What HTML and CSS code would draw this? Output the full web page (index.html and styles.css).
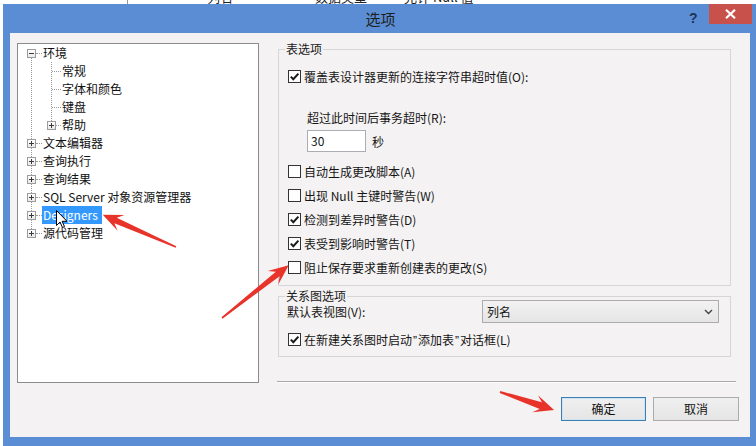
FILE: index.html
```html
<!DOCTYPE html>
<html lang="zh-CN">
<head>
<meta charset="utf-8">
<title>选项</title>
<link rel="stylesheet" href="styles.css">
</head>
<body>
<div class="backdrop">
  <div class="backdrop-inner">
    <span class="bd-line"></span>
    <span class="bd-t1">列名</span>
    <span class="bd-t2">数据类型</span>
    <span class="bd-t3">允许 Null 值</span>
  </div>
</div>
<div class="dialog">
  <div class="titlebar">
    <div class="title-spacer"></div>
    <div class="title">选项</div>
    <div class="help">?</div>
    <div class="close">
      <svg width="11" height="10" viewBox="0 0 11 10"><path d="M1 0.8 L10 9.2 M10 0.8 L1 9.2" stroke="#fff" stroke-width="2.2" fill="none"/></svg>
    </div>
  </div>
  <div class="content">
    <div class="tree">
      <div class="node">
        <div class="row root"><span class="exp minus"></span><span class="dash"></span><span class="label">环境</span></div>
        <div class="children">
          <div class="row leaf"><span class="dash"></span><span class="label">常规</span></div>
          <div class="row leaf"><span class="dash"></span><span class="label">字体和颜色</span></div>
          <div class="row leaf"><span class="dash"></span><span class="label">键盘</span></div>
          <div class="row sub"><span class="exp plus"></span><span class="dash"></span><span class="label">帮助</span></div>
        </div>
      </div>
      <div class="row root"><span class="exp plus"></span><span class="dash"></span><span class="label">文本编辑器</span></div>
      <div class="row root"><span class="exp plus"></span><span class="dash"></span><span class="label">查询执行</span></div>
      <div class="row root"><span class="exp plus"></span><span class="dash"></span><span class="label">查询结果</span></div>
      <div class="row root"><span class="exp plus"></span><span class="dash"></span><span class="label">SQL Server 对象资源管理器</span></div>
      <div class="row root"><span class="exp plus"></span><span class="dash"></span><span class="label selected">Designers</span></div>
      <div class="row root"><span class="exp plus"></span><span class="dash"></span><span class="label">源代码管理</span></div>
    </div>
    <div class="right">
      <div class="group g1">
        <div class="group-title">表选项</div>
        <div class="check first"><span class="box on"><svg width="11" height="11" viewBox="0 0 11 11"><path d="M1.8 5.6 L4.3 8.2 L9.4 2.6" stroke="#1a1a1a" stroke-width="2" fill="none"/></svg></span><span>覆盖表设计器更新的连接字符串超时值(O):</span></div>
        <div class="timeout-label">超过此时间后事务超时(R):</div>
        <div class="timeout-row"><div class="input">30</div><span class="unit">秒</span></div>
        <div class="check-list">
          <div class="check tall"><span class="box"></span><span>自动生成更改脚本(A)</span></div>
          <div class="check tall"><span class="box"></span><span>出现 Null 主键时警告(W)</span></div>
          <div class="check tall"><span class="box on"><svg width="11" height="11" viewBox="0 0 11 11"><path d="M1.8 5.6 L4.3 8.2 L9.4 2.6" stroke="#1a1a1a" stroke-width="2" fill="none"/></svg></span><span>检测到差异时警告(D)</span></div>
          <div class="check tall"><span class="box on"><svg width="11" height="11" viewBox="0 0 11 11"><path d="M1.8 5.6 L4.3 8.2 L9.4 2.6" stroke="#1a1a1a" stroke-width="2" fill="none"/></svg></span><span>表受到影响时警告(T)</span></div>
          <div class="check tall"><span class="box"></span><span>阻止保存要求重新创建表的更改(S)</span></div>
        </div>
      </div>
      <div class="group g2">
        <div class="group-title">关系图选项</div>
        <div class="select-row">
          <span>默认表视图(V):</span>
          <div class="select"><span>列名</span><svg width="9" height="6" viewBox="0 0 9 6"><path d="M1 1 L4.5 4.5 L8 1" stroke="#444" stroke-width="1.4" fill="none"/></svg></div>
        </div>
        <div class="check diag"><span class="box on"><svg width="11" height="11" viewBox="0 0 11 11"><path d="M1.8 5.6 L4.3 8.2 L9.4 2.6" stroke="#1a1a1a" stroke-width="2" fill="none"/></svg></span><span>在新建关系图时启动<span class="q">”</span>添加表<span class="q">”</span>对话框(L)</span></div>
      </div>
      <div class="sep"></div>
      <div class="buttons">
        <div class="btn default">确定</div>
        <div class="btn">取消</div>
      </div>
    </div>
  </div>
</div>
<svg class="annot" width="756" height="446" viewBox="0 0 756 446">
  <g fill="#e8332b">
    <polygon transform="translate(176 247) rotate(203.7)" points="0,-0.8 66,-3 60,-8.5 80,0 60,8.5 66,3 0,0.8"/>
    <polygon transform="translate(222 318) rotate(-38.3)" points="0,-0.8 71,-3 65,-8.5 85,0 65,8.5 71,3 0,0.8"/>
    <polygon transform="translate(500 392) rotate(18.4)" points="0,-1 43,-3.5 37,-9 57,0 37,9 43,3.5 0,1"/>
  </g>
  <path transform="translate(56.5 210.5)" d="M0 0 L0 15 L3.5 11.5 L6 17 L8 16 L5.6 10.8 L10.5 10.8 Z" fill="#fff" stroke="#000" stroke-width="1"/>
</svg>
</body>
</html>
```
FILE: styles.css
```css
html, body {
  margin: 0;
  padding: 0;
  overflow: hidden;
  background: #ffffff;
}
body {
  width: 756px;
  height: 446px;
  position: relative;
  font-family: "Noto Sans CJK SC", "Noto Sans", sans-serif;
  font-size: 12px;
  color: #151515;
}

/* window behind the dialog */
.backdrop {
  height: 4px;
  overflow: hidden;
}
.backdrop-inner {
  display: flex;
  align-items: flex-start;
  margin-top: -11px;
  font-size: 13px;
  line-height: 16px;
  color: #222;
}
.bd-line {
  width: 1px;
  height: 20px;
  background: #9a9a9a;
  margin-left: 127px;
}
.bd-t1 { margin-left: 79px; }
.bd-t2 { margin-left: 82px; }
.bd-t3 { margin-left: 37px; }

/* dialog frame */
.dialog {
  width: 754px;
  margin-left: 3px;
  background: #5a8dd3;
  padding: 0 7px 9px 7px;
  box-sizing: border-box;
}
.titlebar {
  height: 29px;
  display: flex;
  align-items: flex-start;
}
.title-spacer { width: 62px; }
.title {
  flex: 1;
  text-align: center;
  line-height: 29px;
  font-size: 15px;
  color: #1e1e1e;
}
.help {
  margin-top: 5px;
  width: 8px;
  line-height: 18px;
  font-family: "Liberation Sans", sans-serif;
  font-weight: bold;
  font-size: 14px;
  color: #1d3557;
  margin-right: 12px;
}
.close {
  width: 43px;
  height: 20px;
  background: #c9514b;
  display: flex;
  align-items: center;
  justify-content: center;
  margin-right: -2px;
}

/* content */
.content {
  background: #f4f2f2;
  height: 404px;
  display: flex;
  align-items: flex-start;
  padding: 10px 0 0 7px;
  box-sizing: border-box;
}

/* tree */
.tree {
  width: 242px;
  height: 340px;
  box-sizing: border-box;
  border: 1px solid #8b8c8e;
  background: #fff;
  position: relative;
  flex: 0 0 auto;
}
.tree::before {
  content: "";
  position: absolute;
  left: 13px;
  top: 14px;
  height: 171px;
  border-left: 1px dotted #9a9a9a;
}
.children { position: relative; }
.children::before {
  content: "";
  position: absolute;
  left: 33px;
  top: 0;
  height: 59px;
  border-left: 1px dotted #9a9a9a;
}
.row {
  display: flex;
  align-items: center;
  height: 18px;
  line-height: 18px;
  white-space: nowrap;
}
.exp {
  width: 9px;
  height: 9px;
  box-sizing: border-box;
  border: 1px solid #9c9c9c;
  background: linear-gradient(#ffffff, #e9e9e9);
  position: relative;
  z-index: 1;
  flex: 0 0 auto;
}
.exp::before {
  content: "";
  position: absolute;
  left: 1px;
  top: 3px;
  width: 5px;
  height: 1px;
  background: #3a3a3a;
}
.exp.plus::after {
  content: "";
  position: absolute;
  left: 3px;
  top: 1px;
  width: 1px;
  height: 5px;
  background: #3a3a3a;
}
.dash {
  height: 0;
  border-top: 1px dotted #9a9a9a;
  flex: 0 0 auto;
}
.row.root .exp { margin-left: 9px; }
.row.root .dash { width: 6px; }
.row.leaf .dash { margin-left: 34px; width: 9px; }
.row.sub .exp { margin-left: 29px; }
.row.sub .dash { width: 5px; }
.label {
  padding: 0 1px;
  color: #111;
}
.label.selected {
  background: #3399ff;
  color: #fff;
  padding: 0 4px 0 1px;
}

/* right column */
.right {
  width: 462px;
  margin-left: 18px;
  display: flex;
  flex-direction: column;
}
.group {
  border: 1px solid #d6d6d6;
  margin: 0 8px 0 1px;
  padding: 0 11px 6px 9px;
}
.g1 { margin-top: 6px; }
.g2 { margin-top: 10px; padding-bottom: 7px; }
.group-title {
  width: fit-content;
  margin: -9px 0 0 -3px;
  padding: 0 1px;
  line-height: 16px;
  background: #f4f2f2;
  color: #1a1a1a;
}
.check {
  display: flex;
  align-items: center;
  height: 20px;
  white-space: nowrap;
}
.check.first { margin-top: 9px; }
.check.tall { height: 24px; }
.check.diag { margin-top: 6px; }
.q {
  font-family: "Liberation Sans", sans-serif;
  padding: 0 1px;
}
.box {
  width: 13px;
  height: 13px;
  box-sizing: border-box;
  border: 1px solid #333;
  background: #fff;
  margin-right: 3px;
  display: flex;
  align-items: center;
  justify-content: center;
  flex: 0 0 auto;
}
.timeout-label {
  margin: 24px 0 0 19px;
  line-height: 16px;
}
.timeout-row {
  display: flex;
  align-items: center;
  margin: 4px 0 0 19px;
}
.input {
  width: 59px;
  height: 22px;
  box-sizing: border-box;
  border: 1px solid #abadb3;
  background: #fff;
  line-height: 20px;
  padding-left: 3px;
}
.unit { margin-left: 6px; }
.check-list { margin-top: 7px; }

.select-row {
  display: flex;
  align-items: center;
  height: 23px;
  margin-top: -4px;
  margin-left: -1px;
}
.select {
  margin-left: auto;
  width: 237px;
  height: 23px;
  box-sizing: border-box;
  border: 1px solid #acacac;
  background: linear-gradient(#f2f2f2, #e5e5e5);
  display: flex;
  align-items: center;
  justify-content: space-between;
  padding: 0 5px 0 4px;
}

.sep {
  margin: 24px 3px 0 0;
  border-top: 1px solid #a8a8a8;
  border-bottom: 1px solid #ffffff;
}
.buttons {
  display: flex;
  justify-content: flex-end;
  gap: 7px;
  margin-top: 14px;
}
.btn {
  width: 86px;
  height: 24px;
  box-sizing: border-box;
  border: 1px solid #acacac;
  background: linear-gradient(#f0f0f0, #e5e5e5);
  text-align: center;
  line-height: 22px;
  color: #111;
}
.btn.default {
  width: 85px;
  border-color: #3c7fb1;
  box-shadow: inset 0 0 0 1px #cfe3f5;
}

/* annotations drawn over the screenshot */
.annot {
  position: absolute;
  left: 0;
  top: 0;
  pointer-events: none;
}
```
